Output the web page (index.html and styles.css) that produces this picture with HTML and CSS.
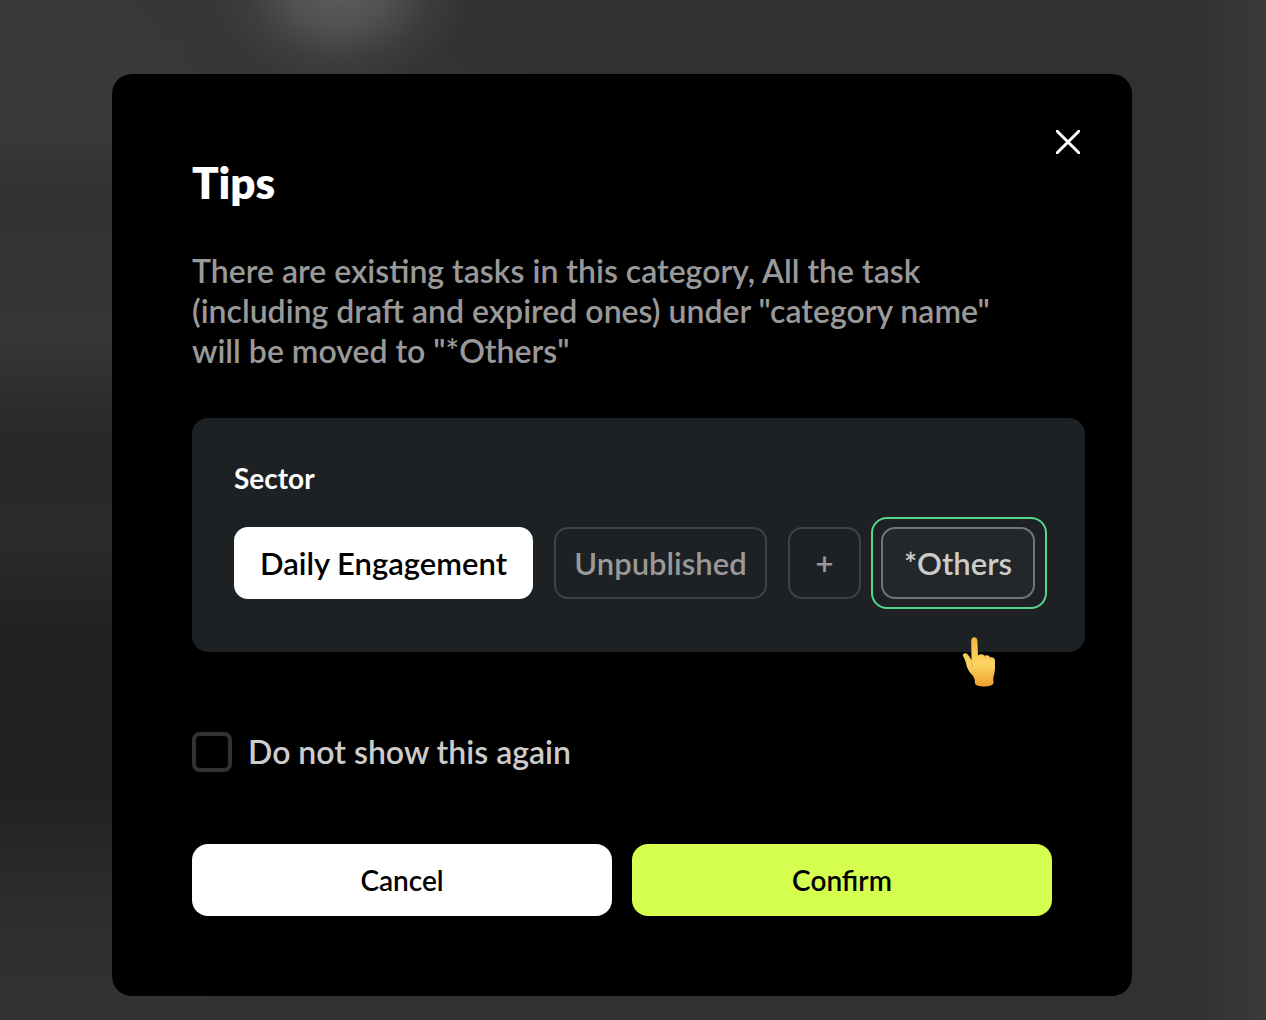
FILE: index.html
```html
<!DOCTYPE html>
<html lang="en">

<head>
    <meta charset="UTF-8">
    <meta name="viewport" content="width=device-width, initial-scale=1.0">
    <title>Tips</title>
    <link rel="stylesheet" href="styles.css">
</head>

<body>
    <div class="overlay">
        <div class="modal" role="dialog" aria-labelledby="modal-title">
            <button class="close" type="button" aria-label="Close">
                <svg viewBox="0 0 24 24" width="24" height="24">
                    <path d="M1.2 1.2L22.8 22.8M22.8 1.2L1.2 22.8" stroke="#fff" stroke-width="3" stroke-linecap="round" />
                </svg>
            </button>

            <h1 class="title" id="modal-title">Tips</h1>
            <p class="message">There are existing tasks in this category, All the task (including draft and expired ones) under "category name" will be moved to "*Others"</p>

            <!-- Sector preview -->
            <section class="sector">
                <h2 class="sector-title">Sector</h2>
                <div class="tags">
                    <button class="tag tag-active" type="button">Daily Engagement</button>
                    <button class="tag tag-unpublished" type="button">Unpublished</button>
                    <button class="tag tag-add" type="button">+</button>
                    <div class="highlight">
                        <button class="tag tag-others" type="button">*Others</button>
                    </div>
                </div>
                <svg class="pointer" viewBox="0 0 34 52" width="34" height="52">
                    <defs>
                        <linearGradient id="skin" x1="0" y1="0" x2="0" y2="1">
                            <stop offset="0" stop-color="#f3b83c" />
                            <stop offset="0.55" stop-color="#fcd563" />
                            <stop offset="1" stop-color="#eaa02c" />
                        </linearGradient>
                    </defs>
                    <path d="M9.200 4.500C9.200 0 15.200 0 15.400 4.500L16 19.500C18 17.500 21.500 18 22.500 20C24.500 18.500 27.500 19.500 28 21.500C30.500 20.500 33 22 33 25C33 31 33.500 34 31.500 41C31 43 31.500 45 31.500 47C31.500 51.500 13.500 51.500 13 47.500C12.800 44.500 12.800 42.500 11 40C8.500 37 5.500 34 4.300 28.500C3.700 25 2.500 23 1 20C0 17.500 3.500 16 5.800 18.500C7.500 20.500 8.500 22.500 9.500 24Z" fill="url(#skin)" />
                    <path d="M9.500 24C9.600 26.500 9.800 28 10.800 30M22.500 20L22.700 22M28 21.500L28 23" fill="none" stroke="#e5a436" stroke-width="0.8" stroke-linecap="round" />
                </svg>
            </section>

            <label class="remember">
                <input type="checkbox" class="checkbox">
                <span>Do not show this again</span>
            </label>

            <div class="actions">
                <button class="btn btn-cancel" type="button">Cancel</button>
                <button class="btn btn-confirm" type="button">Confirm</button>
            </div>
        </div>
    </div>
</body>

</html>
```
FILE: styles.css
```css
* {
    box-sizing: border-box;
}

body {
    margin: 0;
    font-family: Lato, "Liberation Sans", sans-serif;
    color: #fff;
    background-color: #303133;
}

button {
    font-family: inherit;
    cursor: pointer;
}

/* Blurred page behind the modal */
.overlay {
    min-height: 100vh;
    padding: 74px 134px 24px 112px;
    background:
        radial-gradient(ellipse 130px 100px at 340px -10px, #5e5f5c, rgba(94, 95, 92, 0.7) 35%, rgba(94, 95, 92, 0.2) 70%, rgba(94, 95, 92, 0)),
        linear-gradient(to right, rgba(48, 49, 51, 0) 9%, #303133 45%, #303133 94%, #393a3c),
        linear-gradient(#363839, #393a3b 12%, #313234 19%, #343637 33%, #262726 44%, #2b2b2b 53%, #202020 63%, #212121 77%, #2c2d2e 89%, #323335);
}

.modal {
    position: relative;
    padding: 80px;
    border-radius: 20px;
    background-color: #000;
}

.close {
    position: absolute;
    top: 50px;
    right: 46px;
    display: flex;
    padding: 6px;
    border: none;
    background: none;
}

.title {
    margin: 0 0 40px;
    font-size: 44px;
    font-weight: 800;
    line-height: 57px;
}

.message {
    margin: 0 0 47px;
    padding-right: 40px;
    font-size: 32px;
    font-weight: 600;
    line-height: 40px;
    color: #999;
}

/* The preview runs a little past the text column */
.sector {
    position: relative;
    margin: 0 -33px 80px 0;
    padding: 40px 36px 43px 42px;
    border-radius: 16px;
    background-color: #1e2123;
}

.sector-title {
    margin: 0 0 19px;
    font-size: 28px;
    font-weight: 700;
    line-height: 40px;
}

.tags {
    display: flex;
    align-items: center;
}

.tag {
    height: 72px;
    padding: 0;
    border: 2px solid #404244;
    border-radius: 14px;
    font-size: 31px;
    font-weight: 600;
    color: #999;
    background: none;
}

.tag-active {
    width: 299px;
    margin-right: 21px;
    border-color: #fff;
    color: #000;
    background-color: #fff;
}

.tag-unpublished {
    width: 213px;
    margin-right: 21px;
}

.tag-add {
    width: 73px;
    margin-right: 10px;
}

.highlight {
    padding: 8px 10px 8px 8px;
    border: 2px solid #56d68c;
    border-radius: 16px;
}

.tag-others {
    width: 154px;
    border-color: #737577;
    color: #ccc;
    background-color: #242729;
}

.pointer {
    position: absolute;
    right: 89px;
    bottom: -36px;
}

.remember {
    display: flex;
    align-items: center;
    gap: 16px;
    margin-bottom: 72px;
    font-size: 32px;
    font-weight: 600;
    line-height: 40px;
    color: #ccc;
}

.checkbox {
    appearance: none;
    width: 40px;
    height: 40px;
    margin: 0;
    border: 4px solid #333;
    border-radius: 8px;
}

.checkbox:checked {
    background-color: #d5ff4f;
}

.actions {
    display: flex;
    gap: 20px;
}

.btn {
    flex: 1;
    height: 72px;
    border: none;
    border-radius: 16px;
    font-size: 28px;
    font-weight: 600;
    color: #000;
}

.btn-cancel {
    background-color: #fff;
}

.btn-confirm {
    background-color: #d5ff4f;
}
```
